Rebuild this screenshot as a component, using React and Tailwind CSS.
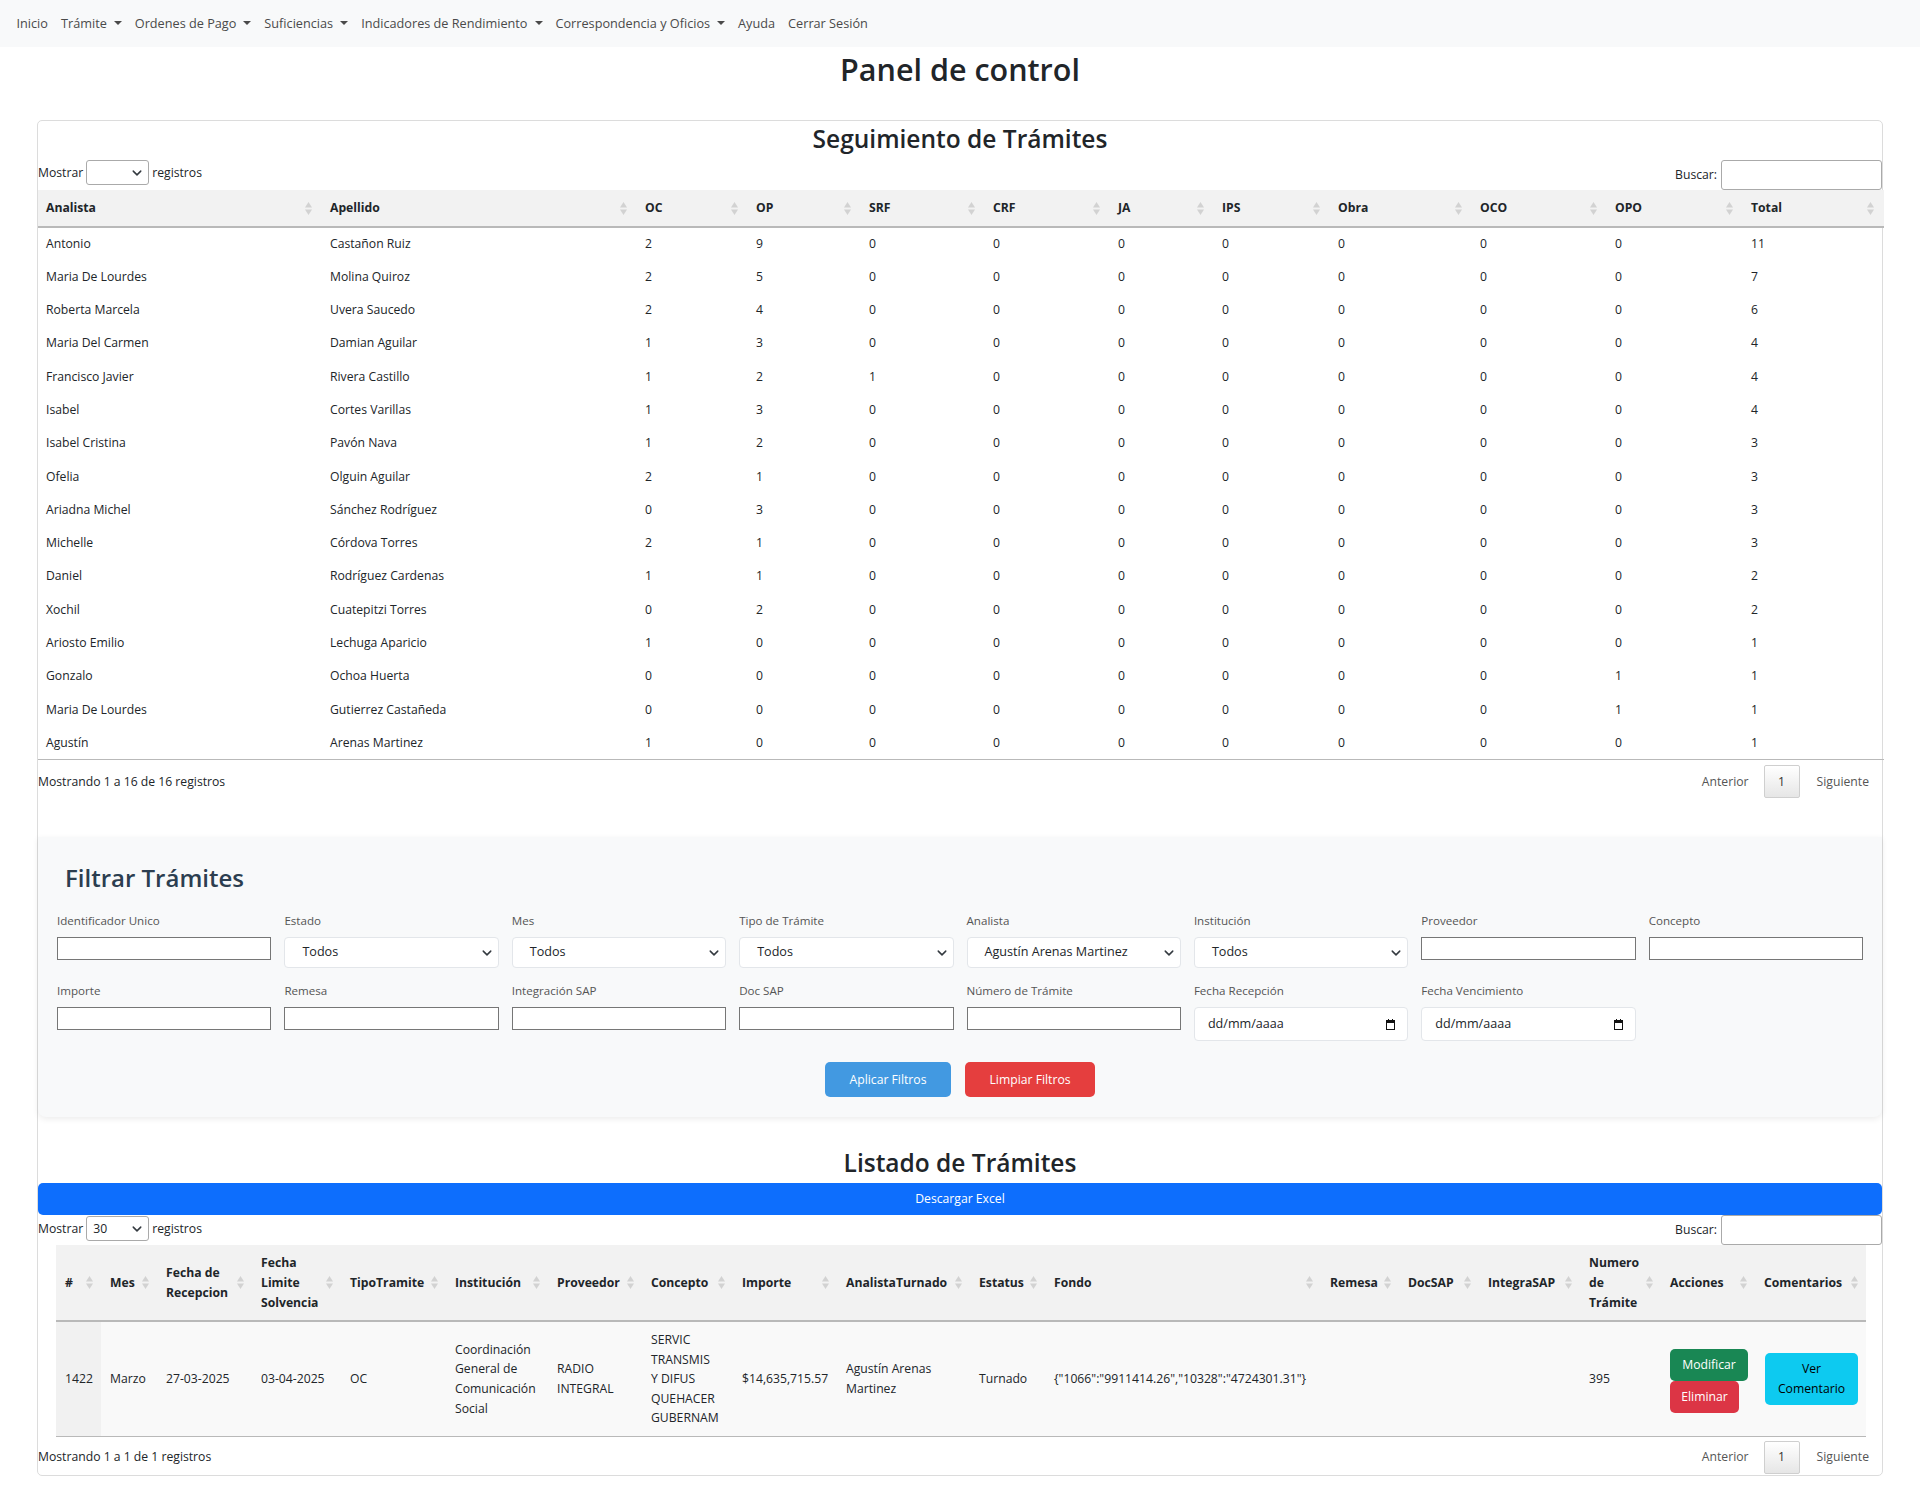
import React from 'react';

const navItems = [
  { label: 'Inicio' },
  { label: 'Trámite', caret: true },
  { label: 'Ordenes de Pago', caret: true },
  { label: 'Suficiencias', caret: true },
  { label: 'Indicadores de Rendimiento', caret: true },
  { label: 'Correspondencia y Oficios', caret: true },
  { label: 'Ayuda' },
  { label: 'Cerrar Sesión' },
];

const segCols = [
  { h: 'Analista', w: 'w-[284px]' },
  { h: 'Apellido', w: 'w-[315px]' },
  { h: 'OC', w: 'w-[111px]' },
  { h: 'OP', w: 'w-[113px]' },
  { h: 'SRF', w: 'w-[124px]' },
  { h: 'CRF', w: 'w-[125px]' },
  { h: 'JA', w: 'w-[104px]' },
  { h: 'IPS', w: 'w-[116px]' },
  { h: 'Obra', w: 'w-[142px]' },
  { h: 'OCO', w: 'w-[135px]' },
  { h: 'OPO', w: 'w-[136px]' },
  { h: 'Total', w: 'w-[141px]' },
];

const segRows = [
  ['Antonio', 'Castañon Ruiz', 2, 9, 0, 0, 0, 0, 0, 0, 0, 11],
  ['Maria De Lourdes', 'Molina Quiroz', 2, 5, 0, 0, 0, 0, 0, 0, 0, 7],
  ['Roberta Marcela', 'Uvera Saucedo', 2, 4, 0, 0, 0, 0, 0, 0, 0, 6],
  ['Maria Del Carmen', 'Damian Aguilar', 1, 3, 0, 0, 0, 0, 0, 0, 0, 4],
  ['Francisco Javier', 'Rivera Castillo', 1, 2, 1, 0, 0, 0, 0, 0, 0, 4],
  ['Isabel', 'Cortes Varillas', 1, 3, 0, 0, 0, 0, 0, 0, 0, 4],
  ['Isabel Cristina', 'Pavón Nava', 1, 2, 0, 0, 0, 0, 0, 0, 0, 3],
  ['Ofelia', 'Olguin Aguilar', 2, 1, 0, 0, 0, 0, 0, 0, 0, 3],
  ['Ariadna Michel', 'Sánchez Rodríguez', 0, 3, 0, 0, 0, 0, 0, 0, 0, 3],
  ['Michelle', 'Córdova Torres', 2, 1, 0, 0, 0, 0, 0, 0, 0, 3],
  ['Daniel', 'Rodríguez Cardenas', 1, 1, 0, 0, 0, 0, 0, 0, 0, 2],
  ['Xochil', 'Cuatepitzi Torres', 0, 2, 0, 0, 0, 0, 0, 0, 0, 2],
  ['Ariosto Emilio', 'Lechuga Aparicio', 1, 0, 0, 0, 0, 0, 0, 0, 0, 1],
  ['Gonzalo', 'Ochoa Huerta', 0, 0, 0, 0, 0, 0, 0, 0, 1, 1],
  ['Maria De Lourdes', 'Gutierrez Castañeda', 0, 0, 0, 0, 0, 0, 0, 0, 1, 1],
  ['Agustín', 'Arenas Martinez', 1, 0, 0, 0, 0, 0, 0, 0, 0, 1],
];

const listCols = [
  { h: ['#'], w: 'w-[45px]' },
  { h: ['Mes'], w: 'w-[56px]' },
  { h: ['Fecha de', 'Recepcion'], w: 'w-[95px]' },
  { h: ['Fecha', 'Limite', 'Solvencia'], w: 'w-[89px]' },
  { h: ['TipoTramite'], w: 'w-[105px]' },
  { h: ['Institución'], w: 'w-[102px]' },
  { h: ['Proveedor'], w: 'w-[94px]' },
  { h: ['Concepto'], w: 'w-[91px]' },
  { h: ['Importe'], w: 'w-[104px]' },
  { h: ['AnalistaTurnado'], w: 'w-[133px]' },
  { h: ['Estatus'], w: 'w-[75px]' },
  { h: ['Fondo'], w: 'w-[276px]' },
  { h: ['Remesa'], w: 'w-[78px]' },
  { h: ['DocSAP'], w: 'w-[80px]' },
  { h: ['IntegraSAP'], w: 'w-[101px]' },
  { h: ['Numero', 'de', 'Trámite'], w: 'w-[81px]' },
  { h: ['Acciones'], w: 'w-[94px]' },
  { h: ['Comentarios'], w: 'w-[111px]' },
];

const filterRow1 = [
  { label: 'Identificador Unico', type: 'text' },
  { label: 'Estado', type: 'select', value: 'Todos' },
  { label: 'Mes', type: 'select', value: 'Todos' },
  { label: 'Tipo de Trámite', type: 'select', value: 'Todos' },
  { label: 'Analista', type: 'select', value: 'Agustín Arenas Martinez' },
  { label: 'Institución', type: 'select', value: 'Todos' },
  { label: 'Proveedor', type: 'text' },
  { label: 'Concepto', type: 'text' },
];

const filterRow2 = [
  { label: 'Importe', type: 'text' },
  { label: 'Remesa', type: 'text' },
  { label: 'Integración SAP', type: 'text' },
  { label: 'Doc SAP', type: 'text' },
  { label: 'Número de Trámite', type: 'text' },
  { label: 'Fecha Recepción', type: 'date' },
  { label: 'Fecha Vencimiento', type: 'date' },
];

const SortIcon = ({ className }) => (
  <svg width="7" height="13" viewBox="0 0 7 13" className={className}>
    <path d="M3.5 0L7 5.5H0z" fill="#d2d2d2" />
    <path d="M0 7.5h7L3.5 13z" fill="#d2d2d2" />
  </svg>
);

const Chevron = ({ className }) => (
  <svg width="10" height="10" viewBox="0 0 16 16" className={className}>
    <path d="M2 5l6 6 6-6" fill="none" stroke="#343a40" strokeWidth="2.4" strokeLinecap="round" strokeLinejoin="round" />
  </svg>
);

const CalendarIcon = () => (
  <svg width="9" height="11" viewBox="0 0 9 11">
    <rect x="0.5" y="1.5" width="8" height="9" fill="none" stroke="#111" strokeWidth="1" />
    <rect x="0" y="1" width="9" height="3" fill="#111" />
    <rect x="2" y="0" width="1" height="2" fill="#111" />
    <rect x="6" y="0" width="1" height="2" fill="#111" />
  </svg>
);

const SmallSelect = ({ value }) => (
  <div className="relative w-[63px] h-[25px] mx-[3px] border border-[#aaa] rounded-[3px] bg-white flex items-center pl-[6px]">
    <span>{value}</span>
    <Chevron className="absolute right-[6px] top-[7px]" />
  </div>
);

const Pagination = () => (
  <div className="flex items-center pr-[13px] text-[#555]">
    <span className="pr-[15px]">Anterior</span>
    <span className="w-[36px] h-[33px] flex items-center justify-center border border-[#cfcfcf] rounded-[2px] bg-gradient-to-b from-white to-[#e6e6e6] text-[#333]">1</span>
    <span className="pl-[17px]">Siguiente</span>
  </div>
);

const FilterField = ({ f }) => (
  <div className="flex flex-col">
    <label className="text-[11.6px] text-[#555] leading-[17px] h-[17px] mb-[8px]">{f.label}</label>
    {f.type === 'text' && <input className="h-[23px] w-full border border-[#767676] bg-white" />}
    {f.type === 'select' && (
      <div className="relative h-[31px] w-full bg-white border border-[#e3e6ea] rounded-[4px] flex items-center pl-[17px] text-[12.6px]">
        <span>{f.value}</span>
        <Chevron className="absolute right-[6px] top-[10px]" />
      </div>
    )}
    {f.type === 'date' && (
      <div className="relative h-[34px] w-full bg-white border border-[#e3e6ea] rounded-[4px] flex items-center justify-between pl-[13px] pr-[12px] text-[12.6px]">
        <span>dd/mm/aaaa</span>
        <CalendarIcon />
      </div>
    )}
  </div>
);

export default function App() {
  return (
    <div className="font-['Open_Sans',sans-serif] text-[12.2px] text-[#212529] bg-white min-h-[1494px]">
      <nav className="h-[47px] bg-[#f8f9fa] flex items-center pl-[10px] text-[#4a4a4a] text-[12.7px]">
        {navItems.map((n) => (
          <span key={n.label} className="px-[6.5px] flex items-center">
            {n.label}
            {n.caret && (
              <span className="ml-[7px] inline-block w-0 h-0 border-t-[4px] border-t-[#4a4a4a] border-x-[4px] border-x-transparent" />
            )}
          </span>
        ))}
      </nav>

      <h1 className="text-center text-[30.5px] font-semibold leading-[37px] mt-[4px] mb-[32px]">Panel de control</h1>

      <div className="mx-[37px] border border-[#dcdcdc] rounded-[5px] pb-[1px]">
        <h2 className="text-center text-[24.5px] font-semibold h-[39px] leading-[36px]">Seguimiento de Trámites</h2>

        <div className="flex justify-between h-[30px]">
          <div className="flex items-start">
            <span className="leading-[25px]">Mostrar</span>
            <SmallSelect value="" />
            <span className="leading-[25px]">registros</span>
          </div>
          <div className="flex items-center">
            <span className="mr-[4px]">Buscar:</span>
            <input className="w-[161px] h-[30px] border border-[#aaa] rounded-[3px] bg-white" />
          </div>
        </div>

        <table className="w-full table-fixed border-collapse">
          <colgroup>
            {segCols.map((c) => (
              <col key={c.h} className={c.w} />
            ))}
          </colgroup>
          <thead>
            <tr className="bg-[#f2f2f2] h-[37px] border-b-2 border-[#b9b9b9]">
              {segCols.map((c) => (
                <th key={c.h} className="relative text-left font-bold pl-[8px]">
                  {c.h}
                  <SortIcon className="absolute right-[10px] top-[12px]" />
                </th>
              ))}
            </tr>
          </thead>
          <tbody className="border-b border-[#b9b9b9]">
            {segRows.map((r, i) => (
              <tr key={i} className="h-[33.3px]">
                {r.map((v, j) => (
                  <td key={j} className="pl-[8px]">{v}</td>
                ))}
              </tr>
            ))}
          </tbody>
        </table>

        <div className="flex justify-between items-center mt-[5px] h-[33px]">
          <span>Mostrando 1 a 16 de 16 registros</span>
          <Pagination />
        </div>

        <div className="mt-[39px] bg-[#f8f9fa] rounded-b-[8px] shadow-[0_2px_6px_rgba(0,0,0,0.08)] px-[19px] pt-[24px] pb-[20px]">
          <h3 className="pl-[8px] text-[24px] font-semibold text-[#2c3e50] h-[34px] leading-[34px]">Filtrar Trámites</h3>
          <div className="mt-[17px] grid grid-cols-8 gap-x-[13px] gap-y-[14px]">
            {filterRow1.map((f) => (
              <FilterField key={f.label} f={f} />
            ))}
            {filterRow2.map((f) => (
              <FilterField key={f.label} f={f} />
            ))}
          </div>
          <div className="mt-[21px] flex justify-center gap-[14px]">
            <button className="h-[35px] w-[126px] rounded-[5px] bg-[#4299e1] text-white">Aplicar Filtros</button>
            <button className="h-[35px] w-[130px] rounded-[5px] bg-[#e53e3e] text-white">Limpiar Filtros</button>
          </div>
        </div>

        <h2 className="mt-[28px] text-center text-[24.5px] font-semibold h-[36px] leading-[36px]">Listado de Trámites</h2>
        <button className="mt-[2px] w-full h-[32px] rounded-[5px] bg-[#0d6efd] text-white">Descargar Excel</button>

        <div className="flex justify-between h-[30px]">
          <div className="flex items-start pt-[1px]">
            <span className="leading-[25px]">Mostrar</span>
            <SmallSelect value="30" />
            <span className="leading-[25px]">registros</span>
          </div>
          <div className="flex items-center">
            <span className="mr-[4px]">Buscar:</span>
            <input className="w-[161px] h-[30px] border border-[#aaa] rounded-[3px] bg-white" />
          </div>
        </div>

        <div className="mx-[18px]">
          <table className="w-full table-fixed border-collapse">
            <colgroup>
              {listCols.map((c) => (
                <col key={c.h.join()} className={c.w} />
              ))}
            </colgroup>
            <thead>
              <tr className="bg-[#f2f2f2] h-[76px] border-b-2 border-[#b9b9b9]">
                {listCols.map((c) => (
                  <th key={c.h.join()} className="relative text-left font-bold pl-[9px] leading-[19.6px] whitespace-nowrap">
                    {c.h.map((l, k) => (
                      <div key={k}>{l}</div>
                    ))}
                    <SortIcon className="absolute right-[8px] top-[31px]" />
                  </th>
                ))}
              </tr>
            </thead>
            <tbody className="border-b border-[#b9b9b9]">
              <tr className="h-[115px] bg-[#f9f9f9] leading-[19.6px]">
                <td className="pl-[9px] bg-[#f1f1f1]">1422</td>
                <td className="pl-[9px]">Marzo</td>
                <td className="pl-[9px]">27-03-2025</td>
                <td className="pl-[9px]">03-04-2025</td>
                <td className="pl-[9px]">OC</td>
                <td className="pl-[9px]">
                  <div>Coordinación</div>
                  <div>General de</div>
                  <div>Comunicación</div>
                  <div>Social</div>
                </td>
                <td className="pl-[9px]">
                  <div>RADIO</div>
                  <div>INTEGRAL</div>
                </td>
                <td className="pl-[9px]">
                  <div>SERVIC</div>
                  <div>TRANSMIS</div>
                  <div>Y DIFUS</div>
                  <div>QUEHACER</div>
                  <div>GUBERNAM</div>
                </td>
                <td className="pl-[9px] whitespace-nowrap">$14,635,715.57</td>
                <td className="pl-[9px]">
                  <div>Agustín Arenas</div>
                  <div>Martinez</div>
                </td>
                <td className="pl-[9px]">Turnado</td>
                <td className="pl-[9px] whitespace-nowrap">{'{"1066":"9911414.26","10328":"4724301.31"}'}</td>
                <td className="pl-[9px]"></td>
                <td className="pl-[9px]"></td>
                <td className="pl-[9px]"></td>
                <td className="pl-[9px]">395</td>
                <td className="pl-[9px]">
                  <div className="flex flex-col items-start pt-[4px]">
                    <button className="h-[32px] w-[78px] rounded-[5px] bg-[#198754] text-white">Modificar</button>
                    <button className="h-[32px] w-[69px] rounded-[5px] bg-[#dc3545] text-white">Eliminar</button>
                  </div>
                </td>
                <td className="pl-[10px]">
                  <button className="h-[52px] w-[93px] rounded-[5px] bg-[#0dcaf0] text-black leading-[19.6px]">
                    Ver
                    <br />
                    Comentario
                  </button>
                </td>
              </tr>
            </tbody>
          </table>
        </div>

        <div className="flex justify-between items-center pt-[4px] h-[37px]">
          <span>Mostrando 1 a 1 de 1 registros</span>
          <Pagination />
        </div>
      </div>
    </div>
  );
}
